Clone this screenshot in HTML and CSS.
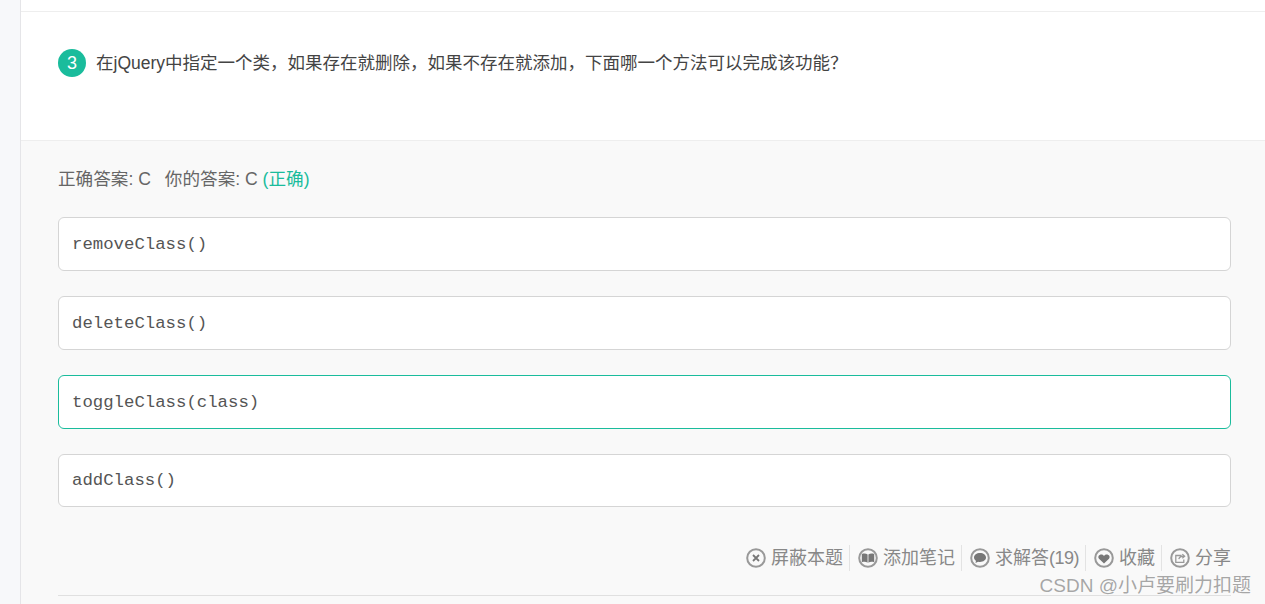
FILE: index.html
```html
<!DOCTYPE html>
<html lang="zh-CN">
<head>
    <meta charset="UTF-8">
    <meta name="viewport" content="width=device-width, initial-scale=1.0">
    <title>在线编程题</title>
    <link rel="stylesheet" href="styles.css">
</head>
<body>
    <div class="page">
        <div class="top-strip"></div>
        <section class="question">
            <span class="question-num">3</span>
            <p class="question-text">在jQuery中指定一个类，如果存在就删除，如果不存在就添加，下面哪一个方法可以完成该功能？</p>
        </section>
        <section class="answer">
            <p class="answer-line">正确答案: C<span class="your-answer">你的答案: C</span> <span class="ok">(正确)</span></p>
            <div class="option">removeClass()</div>
            <div class="option">deleteClass()</div>
            <div class="option correct">toggleClass(class)</div>
            <div class="option last">addClass()</div>
            <div class="actions">
                <a class="action">
                    <svg class="icon" viewBox="0 0 20 20"><circle cx="10" cy="10" r="8.8" class="ring"/><path d="M7 7l6 6M13 7l-6 6" class="cross"/></svg>
                    屏蔽本题
                </a>
                <a class="action">
                    <svg class="icon" viewBox="0 0 20 20"><circle cx="10" cy="10" r="8.8" class="ring"/><path d="M3.800 6c2.200-.8 4.500-.6 5.800.5v8.200c-1.300-1-3.600-1.200-5.800-.5zM16.200 6c-2.200-.8-4.500-.6-5.800.5v8.200c1.300-1 3.600-1.200 5.800-.5z" class="fill"/></svg>
                    添加笔记
                </a>
                <a class="action">
                    <svg class="icon" viewBox="0 0 20 20"><circle cx="10" cy="10" r="8.8" class="ring"/><path d="M10 5c-3.400 0-6 1.900-6 4.500 0 1.400.8 2.500 2 3.300l-.5 2.200 2.600-1.300c.6.100 1.200.2 1.900.2 3.400 0 6-2 6-4.400S13.400 5 10 5z" class="fill"/></svg>
                    求解答<span class="count">(19)</span>
                </a>
                <a class="action">
                    <svg class="icon" viewBox="0 0 20 20"><circle cx="10" cy="10" r="8.8" class="ring"/><path d="M10 15.400l-5-4.700c-2.300-2.600 2.100-6 5-2.800 2.900-3.200 7.300.2 5 2.800z" class="fill"/></svg>
                    收藏
                </a>
                <a class="action">
                    <svg class="icon" viewBox="0 0 20 20"><circle cx="10" cy="10" r="8.8" class="ring"/><path d="M11.500 7.500H5.800v6.800h8v-2.800M8.800 11.200c.5-2 2-3 5-3M12.300 6.200l2.300 2-2.300 2" class="line"/></svg>
                    分享
                </a>
            </div>
            <div class="bottom-line"></div>
        </section>
    </div>
    <div class="watermark">CSDN @小卢要刷力扣题</div>
</body>
</html>
```

FILE: styles.css
```css
html, body {
    margin: 0;
    height: 604px;
    overflow: hidden;
}
body {
    font-family: "Liberation Sans", "Noto Sans CJK SC", sans-serif;
    background-color: #f7f8fa;
    color: #333;
}
p {
    margin: 0;
}
.page {
    margin-left: 20px;
    height: 604px;
    border-left: 1px solid #e5e5e8;
    background-color: #fff;
}
.top-strip {
    height: 11px;
    border-bottom: 1px solid #eeeeee;
}
.question {
    display: flex;
    align-items: flex-start;
    gap: 10px;
    height: 128px;
    padding: 37px 0 0 37px;
    box-sizing: border-box;
}
.question-num {
    width: 28px;
    height: 28px;
    border-radius: 50%;
    background-color: #1abc9c;
    color: #fff;
    font-size: 18px;
    line-height: 28px;
    text-align: center;
}
.question-text {
    font-size: 17.5px;
    line-height: 28px;
    color: #444;
}
.answer {
    height: 464px;
    padding: 24px 34px 0 37px;
    border-top: 1px solid #eeeeee;
    background-color: #f9f9f9;
}
.answer-line {
    font-size: 17.6px;
    line-height: 28px;
    color: #666;
    margin-bottom: 24px;
}
.your-answer {
    margin-left: 14px;
}
.ok {
    color: #1abc9c;
}
.option {
    height: 54px;
    box-sizing: border-box;
    margin-bottom: 25px;
    padding: 0 13px;
    border: 1px solid #d5d5d5;
    border-radius: 6px;
    background-color: #fff;
    font-family: "Liberation Mono", monospace;
    font-size: 17.33px;
    line-height: 54px;
    color: #555;
}
.option.correct {
    border-color: #1abc9c;
}
.option.last {
    height: 53px;
    line-height: 52px;
}
.actions {
    display: flex;
    justify-content: flex-end;
    margin-top: 38px;
    height: 26px;
}
.action {
    display: flex;
    align-items: center;
    gap: 5px;
    padding: 0 6px 0 8px;
    border-left: 1px solid #e3e3e3;
    font-size: 18px;
    line-height: 26px;
    color: #888;
}
.action:first-child {
    border-left: none;
}
.action:last-child {
    padding-right: 0;
}
.count {
    margin-left: -5px;
    letter-spacing: -0.5px;
}
.icon {
    width: 20px;
    height: 20px;
}
.ring {
    fill: none;
    stroke: #999;
    stroke-width: 2;
}
.cross {
    fill: none;
    stroke: #777;
    stroke-width: 1.8;
}
.fill {
    fill: #777;
}
.line {
    fill: none;
    stroke: #999;
    stroke-width: 1.3;
}
.bottom-line {
    height: 1px;
    margin-top: 24px;
    background-color: #e0e0e0;
}
.watermark {
    position: absolute;
    right: 14px;
    top: 573px;
    font-size: 19px;
    line-height: 26px;
    color: rgba(110, 110, 110, 0.6);
}
```
